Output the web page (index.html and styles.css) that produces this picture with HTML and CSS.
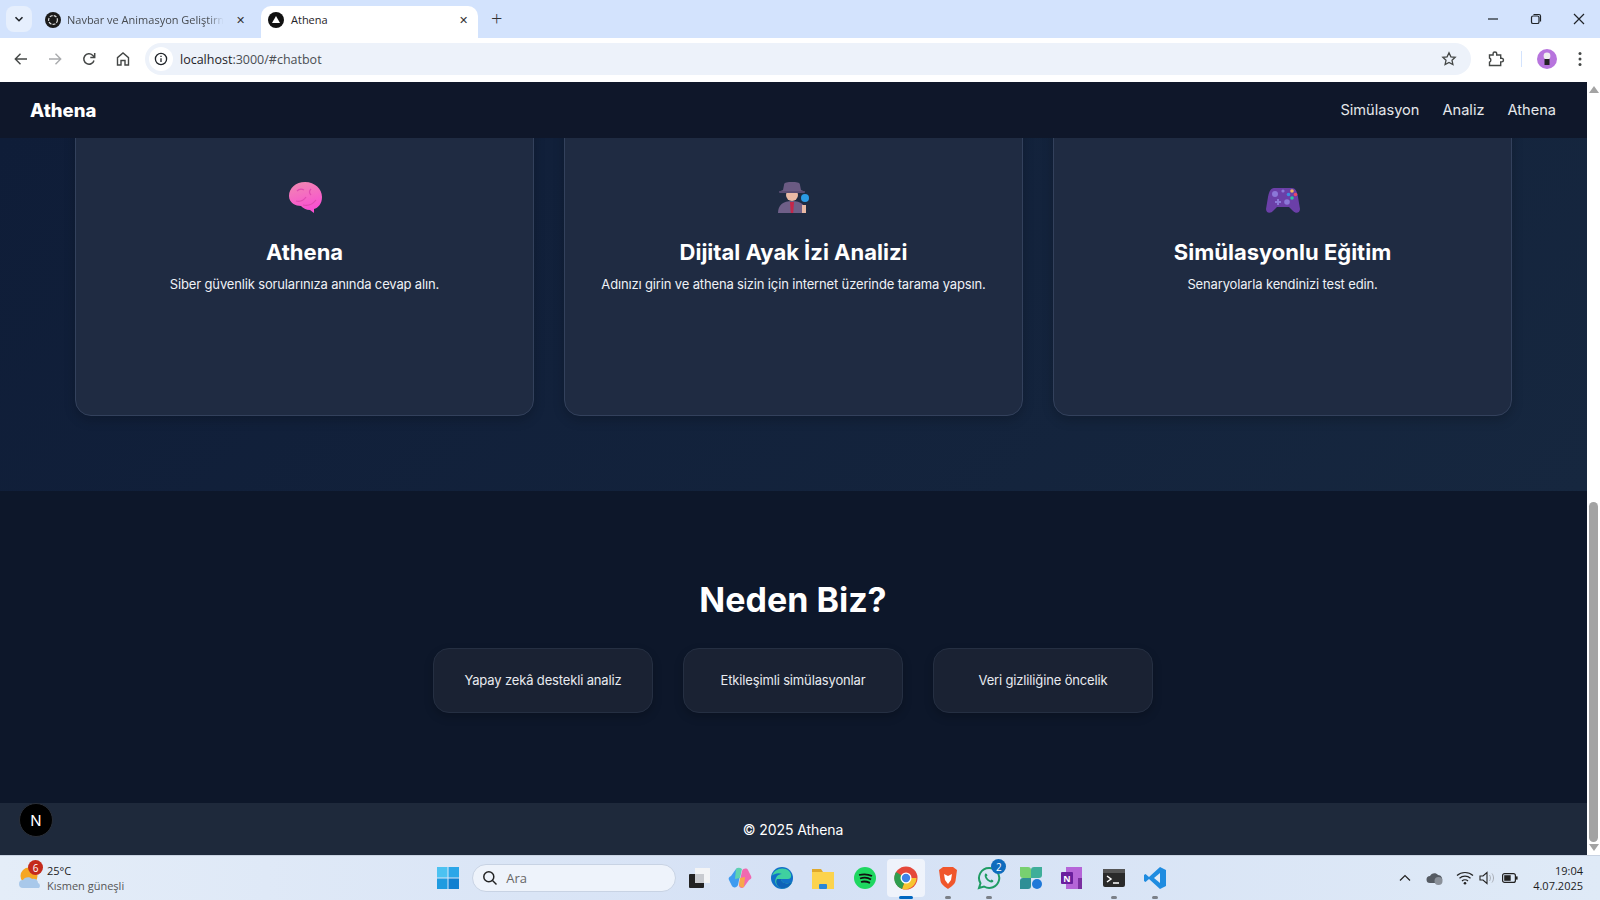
FILE: index.html
```html
<!DOCTYPE html>
<html lang="en">
<head>
    <meta charset="UTF-8">
    <title>Athena</title>
    <link rel="stylesheet" href="styles.css">
</head>
<body>
    <div class="tabstrip">
        <div class="tab-search">
            <svg width="10" height="10" viewBox="0 0 10 10"><path d="M1.500 3.200 5 6.700l3.500-3.500" fill="none" stroke="#1f2328" stroke-width="1.600"/></svg>
        </div>
        <div class="tab">
            <svg class="favicon" width="16" height="16" viewBox="0 0 16 16"><circle cx="8" cy="8" r="8" fill="#1a1a1a"/><circle cx="8" cy="8" r="4.400" fill="none" stroke="#ddd" stroke-width="1.200" stroke-dasharray="3 1.200"/></svg>
            <span class="tab-title tab-fade">Navbar ve Animasyon Geliştirm</span>
            <span class="tab-close">✕</span>
        </div>
        <div class="tab tab-active">
            <svg class="favicon" width="16" height="16" viewBox="0 0 16 16"><circle cx="8" cy="8" r="8" fill="#111"/><path d="M8 4 12 11H4Z" fill="#fff"/></svg>
            <span class="tab-title">Athena</span>
            <span class="tab-close">✕</span>
        </div>
        <span class="tab-new">+</span>
        <div class="window-btns">
            <svg width="12" height="12" viewBox="0 0 12 12"><path d="M1 6h10" stroke="#1f2328" stroke-width="1.200"/></svg>
            <svg width="12" height="12" viewBox="0 0 12 12"><rect x="1.500" y="3" width="7.500" height="7.500" rx="1.600" fill="none" stroke="#1f2328" stroke-width="1.200"/><path d="M3.500 1.500h5.500a1.600 1.600 0 0 1 1.500 1.500v5.500" fill="none" stroke="#1f2328" stroke-width="1.200"/></svg>
            <svg width="12" height="12" viewBox="0 0 12 12"><path d="M1 1l10 10M11 1 1 11" stroke="#1f2328" stroke-width="1.200"/></svg>
        </div>
    </div>

    <div class="toolbar">
        <svg class="tool" width="16" height="16" viewBox="0 0 16 16"><path d="M14 8H2.500M7.500 2.800 2.300 8l5.200 5.200" fill="none" stroke="#444746" stroke-width="1.400"/></svg>
        <svg class="tool" width="16" height="16" viewBox="0 0 16 16"><path d="M2 8h11.500M8.500 2.800 13.700 8l-5.200 5.200" fill="none" stroke="#a9abad" stroke-width="1.400"/></svg>
        <svg class="tool" width="16" height="16" viewBox="0 0 16 16"><path d="M13 9.500A5.200 5.200 0 1 1 11.600 4.200L13.300 6" fill="none" stroke="#444746" stroke-width="1.500"/><path d="M13.700 2v4.400H9.300" fill="none" stroke="#444746" stroke-width="1.500"/></svg>
        <svg class="tool" width="16" height="16" viewBox="0 0 16 16"><path d="M2.500 14V6.600L8 2l5.500 4.600V14h-3.500V9.500H6V14Z" fill="none" stroke="#444746" stroke-width="1.400"/></svg>
        <div class="omnibox">
            <span class="site-info">
                <svg width="14" height="14" viewBox="0 0 14 14"><circle cx="7" cy="7" r="5.600" fill="none" stroke="#1f2328" stroke-width="1.300"/><path d="M7 6.200v3.800M7 3.800v1.300" stroke="#1f2328" stroke-width="1.300"/></svg>
            </span>
            <span class="url">localhost<span class="url-rest">:3000/#chatbot</span></span>
            <svg class="star" width="16" height="16" viewBox="0 0 16 16"><path d="m8 1.800 1.900 4 4.300.5-3.200 3 .9 4.300L8 11.400l-3.900 2.200.9-4.300-3.200-3 4.300-.5Z" fill="none" stroke="#444746" stroke-width="1.300"/></svg>
        </div>
        <svg width="18" height="18" viewBox="0 0 18 18"><path d="M2.500 5h3.600V3.800a1.800 1.800 0 0 1 3.600 0V5h4v3.300h1a1.800 1.800 0 0 1 0 3.600h-1V15.500H2.500v-3.300a2.300 2.300 0 0 0 0-4.200Z" fill="none" stroke="#444746" stroke-width="1.400"/></svg>
        <span class="tool-sep"></span>
        <span class="avatar">
            <svg width="20" height="20" viewBox="0 0 20 20"><circle cx="10" cy="10" r="10" fill="#b774dd"/><circle cx="10" cy="7" r="3.400" fill="#eee"/><rect x="7.500" y="10" width="5" height="6" fill="#222"/></svg>
        </span>
        <svg class="tool-menu" width="4" height="16" viewBox="0 0 4 16"><circle cx="2" cy="2.500" r="1.500" fill="#444746"/><circle cx="2" cy="8" r="1.500" fill="#444746"/><circle cx="2" cy="13.500" r="1.500" fill="#444746"/></svg>
    </div>

    <div class="viewport">
        <div class="page">
            <header class="navbar">
                <div class="logo">Athena</div>
                <nav class="nav-links">
                    <a>Simülasyon</a>
                    <a>Analiz</a>
                    <a>Athena</a>
                </nav>
            </header>

            <section class="features">
                <div class="feature-row">
                    <div class="feature-card">
                        <svg class="emoji" width="36" height="36" viewBox="0 0 36 36">
                            <defs>
                                <linearGradient id="brainFill" x1="0" y1="0" x2="0.300" y2="1">
                                    <stop offset="0" stop-color="#f08ab0"/>
                                    <stop offset="1" stop-color="#f94fd2"/>
                                </linearGradient>
                            </defs>
                            <path d="M2 16C2 8 9 2 18 2c10 0 17 7 17 15 0 7-4 11-8 12l0 4-4-3c-4 0-7-2-9-4C9 26 2 23 2 16Z" fill="url(#brainFill)"/>
                            <path d="M9 21c4 1 8-1 10-4M16 25c4 1 9 0 13-5M24 9c-2 2-2 4 0 6M10 11c2-2 5-2 7-1" fill="none" stroke="#e04bb0" stroke-width="1.200"/>
                        </svg>
                        <h3>Athena</h3>
                        <p>Siber güvenlik sorularınıza anında cevap alın.</p>
                    </div>
                    <div class="feature-card">
                        <svg class="emoji" width="36" height="36" viewBox="1 1 36 36">
                            <path d="M3 34c0-8 5-12 14-12s14 4 14 12Z" fill="#6f5f88"/>
                            <path d="M15 23h4l-.8 11h-2.400Z" fill="#c4274a"/>
                            <circle cx="17" cy="16" r="6" fill="#e9b9a4"/>
                            <path d="M9 6c0-3 4-3 8-3s8 0 8 3l1 5c3 1 4 2 4 2H4s1-1 4-2Z" fill="#6a5a82"/>
                            <rect x="4" y="12" width="26" height="2" rx="1" fill="#5a4c72"/>
                            <path d="M27 26h4v8h-4Z" fill="#e9b9a4"/>
                            <circle cx="30" cy="19" r="4" fill="#2b9be6"/>
                        </svg>
                        <h3>Dijital Ayak İzi Analizi</h3>
                        <p>Adınızı girin ve athena sizin için internet üzerinde tarama yapsın.</p>
                    </div>
                    <div class="feature-card">
                        <svg class="emoji" width="36" height="36" viewBox="0 -2 36 36">
                            <path d="M9 6h18c3 0 5 3 6 9l2 12c0 4-4 5-7 2l-4-4H12l-4 4c-3 3-7 2-7-2l2-12c1-6 3-9 6-9Z" fill="#6b3fa8"/>
                            <circle cx="10" cy="12" r="3" fill="#8b78d8"/>
                            <circle cx="18" cy="9" r="1.600" fill="#8b78d8"/>
                            <path d="M12 17h2v2h2v2h-2v2h-2v-2h-2v-2h2Z" fill="#8b78d8"/>
                            <circle cx="22" cy="20" r="2.800" fill="#8b78d8"/>
                            <circle cx="27" cy="9" r="1.800" fill="#f2b35a"/>
                            <circle cx="30.500" cy="12.500" r="1.800" fill="#e8476a"/>
                            <circle cx="27" cy="16" r="1.800" fill="#2cc4a8"/>
                            <circle cx="23.500" cy="12.500" r="1.800" fill="#3b8fe0"/>
                        </svg>
                        <h3>Simülasyonlu Eğitim</h3>
                        <p>Senaryolarla kendinizi test edin.</p>
                    </div>
                </div>
            </section>

            <section class="why">
                <h2>Neden Biz?</h2>
                <div class="why-row">
                    <div class="why-card">Yapay zekâ destekli analiz</div>
                    <div class="why-card">Etkileşimli simülasyonlar</div>
                    <div class="why-card">Veri gizliliğine öncelik</div>
                </div>
            </section>

            <footer class="footer">© 2025 Athena</footer>

            <div class="next-badge">N</div>
        </div>
        <div class="scrollbar">
            <span class="arrow-up"></span>
            <div class="scroll-track"><div class="scroll-thumb"></div></div>
            <span class="arrow-down"></span>
        </div>
    </div>

    <div class="taskbar">
        <div class="weather">
            <span class="weather-icon">
                <svg width="24" height="24" viewBox="0 0 24 24"><circle cx="10" cy="10" r="8.500" fill="#f5a623"/><path d="M4 22a4 4 0 0 1 0-8c1-3 7-4 9-1 3-1 6 1 6 4a3 3 0 0 1 1 5Z" fill="#a8c8ea"/></svg>
                <span class="weather-badge">6</span>
            </span>
            <div class="weather-text">
                <div class="temp">25°C</div>
                <div class="sky">Kısmen güneşli</div>
            </div>
        </div>

        <div class="task-icons">
            <span class="task-item">
                <svg width="24" height="24" viewBox="0 0 24 24"><path d="M1 1h10.500v10.500H1Z" fill="#4cc2f1"/><path d="M12.500 1H23v10.500H12.500Z" fill="#2ba6e8"/><path d="M1 12.500h10.500V23H1Z" fill="#1f9be0"/><path d="M12.500 12.500H23V23H12.500Z" fill="#0f7fd0"/></svg>
            </span>
            <div class="searchbox">
                <svg width="16" height="16" viewBox="0 0 16 16"><circle cx="6.800" cy="6.800" r="5" fill="none" stroke="#222" stroke-width="1.500"/><path d="m10.500 10.500 4 4" stroke="#222" stroke-width="1.500"/></svg>
                <span>Ara</span>
            </div>
            <span class="task-item">
                <svg width="24" height="24" viewBox="0 0 24 24"><rect x="8" y="2" width="15" height="15" fill="#f3f4f6"/><rect x="2" y="8" width="15" height="14" rx="1" fill="#222"/><rect x="8" y="8" width="9" height="9" fill="#c9cbd0"/></svg>
            </span>
            <span class="task-item">
                <svg width="24" height="24" viewBox="0 0 24 24"><path d="M8 3c2-2 5-1 5 2l-3 14c-1 3-5 3-6 1L1 14c-1-2 0-3 2-4Z" fill="#3d9bf0"/><path d="M16 21c-2 2-5 1-5-2l3-14c1-3 5-3 6-1l3 6c1 2 0 3-2 4Z" fill="#f069b0"/><path d="M8 3c2-2 4-1 6 0l-2 9-5 1Z" fill="#5fd2b0"/><path d="M12 12l5-1-1 10c-2 1-4 0-5-2Z" fill="#f6a84a"/></svg>
            </span>
            <span class="task-item">
                <svg width="24" height="24" viewBox="0 0 24 24"><circle cx="12" cy="12" r="11" fill="#1170c8"/><path d="M2 10C4 3 13 0 19 5c3 3 3 8-1 8H11c0 4 6 6 11 3-2 5-7 7-11 6-5-2-7-6-5-10 1-3 4-4 6-4-4-2-8 0-11 2Z" fill="#3fd0a0"/><path d="M11 13c0 4 6 6 11 3-2 5-7 7-11 6-4-1-6-6-4-9Z" fill="#0d62b8"/></svg>
            </span>
            <span class="task-item">
                <svg width="24" height="24" viewBox="0 0 24 24"><path d="M1 3h9l2 3H1Z" fill="#e0a92b"/><path d="M1 6h22v17H1Z" fill="#fcd34d"/><rect x="8" y="18" width="8" height="5" rx="1" fill="#2a86d8"/></svg>
            </span>
            <span class="task-item">
                <svg width="24" height="24" viewBox="0 0 24 24"><circle cx="12" cy="12" r="11" fill="#1ed760"/><path d="M6 9c4-1 9-1 13 1M7 12.500c3-1 8-1 11 1M8 16c3-1 6-.500 9 .800" fill="none" stroke="#111" stroke-width="1.800"/></svg>
            </span>
            <span class="task-item task-on">
                <svg width="24" height="24" viewBox="0 0 24 24"><circle cx="12" cy="12" r="11.500" fill="#e5483a"/><path d="M12 12 22.500 12A11.500 11.500 0 0 1 8 23Z" fill="#f7c531"/><path d="M12 12 8 23A11.500 11.500 0 0 1 2 6Z" fill="#2f9e4f"/><circle cx="12" cy="12" r="5.500" fill="#fff"/><circle cx="12" cy="12" r="4.200" fill="#3f83e8"/></svg>
            </span>
            <span class="task-item task-open">
                <svg width="24" height="24" viewBox="0 0 24 24"><path d="M7 1h10l4 3-1.500 11c-1 4-5 6-7.500 8-2.500-2-6.500-4-7.500-8L3 4Z" fill="#f0562b"/><path d="M8 8l4 2 4-2-1 6-3 4-3-4Z" fill="#fff"/></svg>
            </span>
            <span class="task-item task-open">
                <svg width="24" height="24" viewBox="0 0 24 24"><path d="M12 2a10 10 0 1 1-5 18.500L2 22l1.500-4.800A10 10 0 0 1 12 2Z" fill="none" stroke="#1f9c64" stroke-width="2"/><path d="M8 8c1-1 2 0 2.500 1.500l-1 1c1 2 2 3 4 4l1-1c1.500.500 2.500 1.500 1.500 2.500-3 2-10-4-8-8Z" fill="#1f9c64"/></svg>
                <span class="task-badge">2</span>
            </span>
            <span class="task-item">
                <svg width="24" height="24" viewBox="0 0 24 24"><path d="M1 1h8a3 3 0 0 1 3 3v8H4a3 3 0 0 1-3-3Z" fill="#78d070"/><path d="M12 4a3 3 0 0 1 3-3h8v8a3 3 0 0 1-3 3h-8Z" fill="#3fae9a"/><path d="M1 15a3 3 0 0 1 3-3h8v8a3 3 0 0 1-3 3H1Z" fill="#2f8f96"/><circle cx="18" cy="18" r="5" fill="#1f78d8"/></svg>
            </span>
            <span class="task-item">
                <svg width="24" height="24" viewBox="0 0 24 24"><path d="M6 1h16v22H6Z" fill="#b565d8"/><path d="M18 12h4v11h-4Z" fill="#7a2fa0"/><rect x="1" y="6" width="12" height="12" rx="1" fill="#6a1f9e"/><text class="onenote-n" x="7" y="15.500">N</text></svg>
            </span>
            <span class="task-item task-open">
                <svg width="24" height="24" viewBox="0 0 24 24"><rect x="1" y="3" width="22" height="18" rx="2" fill="#2a2a2a"/><rect x="1" y="3" width="22" height="4" fill="#555"/><path d="m5 10 4 3-4 3" fill="none" stroke="#fff" stroke-width="1.500"/><path d="M11 17h6" stroke="#fff" stroke-width="1.500"/></svg>
            </span>
            <span class="task-item task-open">
                <svg width="24" height="24" viewBox="0 0 24 24"><path d="M17 1 23 4v16l-6 3L6 13l-3.500 3L1 15V9l1.500-1L6 11Z" fill="#1f8ce0"/><path d="M17 7v10l-6-5Z" fill="#e2ebf7"/></svg>
            </span>
        </div>

        <div class="tray">
            <svg class="tray-chevron" width="12" height="8" viewBox="0 0 12 8"><path d="M1 6.500 6 1.500l5 5" fill="none" stroke="#222" stroke-width="1.200"/></svg>
            <svg class="tray-cloud" width="18" height="16" viewBox="0 0 18 16"><path d="M4 13a3.500 3.500 0 0 1 0-7c1-3 6-4 8-1 3 0 5 3 4 6l-2 2Z" fill="#555b63"/><circle cx="12.500" cy="11" r="4" fill="#8a9099"/></svg>
            <svg class="tray-wifi" width="18" height="14" viewBox="0 0 18 14"><path d="M1 4.500c4.500-4 11.500-4 16 0M3.500 7.200c3-2.700 8-2.700 11 0M6 10c1.600-1.400 4.400-1.400 6 0" fill="none" stroke="#222" stroke-width="1.200"/><circle cx="9" cy="12.300" r="1.300" fill="#222"/></svg>
            <svg class="tray-vol" width="16" height="14" viewBox="0 0 16 14"><path d="M1 5h3l4-3.500v11L4 9H1Z" fill="none" stroke="#222" stroke-width="1.100"/><path d="M10.500 4c1.200 1.800 1.200 4.200 0 6M13 2.500c2 2.800 2 6.200 0 9" fill="none" stroke="#a8adb5" stroke-width="1"/></svg>
            <svg class="tray-batt" width="16" height="10" viewBox="0 0 16 10"><rect x=".6" y=".6" width="12.800" height="8.800" rx="2" fill="none" stroke="#222" stroke-width="1.200"/><rect x="2.200" y="2.200" width="6.500" height="5.600" fill="#222"/><rect x="14" y="3.400" width="1.600" height="3.200" fill="#222"/></svg>
            <div class="clock">
                <div>19:04</div>
                <div>4.07.2025</div>
            </div>
        </div>
    </div>
</body>
</html>
```

FILE: styles.css
```css
* {
    box-sizing: border-box;
}

html, body {
    margin: 0;
    padding: 0;
    height: 900px;
    overflow: hidden;
}

body {
    font-family: Inter, "Liberation Sans", sans-serif;
    display: flex;
    flex-direction: column;
    background: #fff;
}

/* browser tabs */
.tabstrip {
    height: 38px;
    background-color: #d3e3fd;
    display: flex;
    align-items: flex-end;
    padding-left: 6px;
    font-family: "Open Sans", sans-serif;
    flex-shrink: 0;
}

.tab-search {
    width: 26px;
    height: 26px;
    margin-bottom: 6px;
    border-radius: 8px;
    background-color: #e6effd;
    display: flex;
    align-items: center;
    justify-content: center;
}

.tab {
    width: 223px;
    height: 32px;
    padding: 0 16px 5px 7px;
    display: flex;
    align-items: center;
    gap: 6px;
    font-size: 11px;
    color: #474b50;
    margin-left: 6px;
}

.tab-active {
    width: 217px;
    margin-left: 0;
    padding-right: 10px;
    background-color: #fff;
    border-radius: 10px 10px 0 0;
    color: #1f2328;
    gap: 7px;
}

.favicon {
    flex-shrink: 0;
}

.tab-title {
    flex: 1;
    white-space: nowrap;
}

.tab-fade {
    -webkit-mask-image: linear-gradient(90deg, #000 86%, transparent 96%);
    mask-image: linear-gradient(90deg, #000 86%, transparent 96%);
}

.tab-close {
    font-size: 11px;
    color: #333;
}

.tab-new {
    font-size: 20px;
    font-weight: 300;
    color: #333;
    margin: 0 0 6px 13px;
    line-height: 26px;
}

.window-btns {
    margin-left: auto;
    height: 38px;
    display: flex;
    align-items: center;
    gap: 31px;
    padding-right: 15px;
}

/* browser toolbar */
.toolbar {
    height: 44px;
    background-color: #fff;
    border-radius: 10px 10px 0 0;
    display: flex;
    align-items: center;
    padding: 0 18px 2px 13px;
    flex-shrink: 0;
    gap: 16px;
    font-family: "Open Sans", sans-serif;
}

.tool {
    margin-right: 2px;
}

.omnibox {
    flex: 1;
    height: 32px;
    margin-left: -4px;
    border-radius: 16px;
    background-color: #edf2fa;
    display: flex;
    align-items: center;
    padding: 0 14px 0 4px;
    font-size: 12.5px;
    color: #1f2328;
}

.site-info {
    width: 24px;
    height: 24px;
    border-radius: 50%;
    background-color: #fff;
    display: flex;
    align-items: center;
    justify-content: center;
    margin-right: 7px;
}

.url-rest {
    color: #4a4e53;
}

.star {
    margin-left: auto;
}

.tool-sep {
    width: 1px;
    height: 16px;
    margin-right: -1px;
    background-color: #d3e3fd;
}

.avatar {
    display: flex;
}

.tool-menu {
    margin-left: 5px;
}

/* page */
.viewport {
    height: 773px;
    display: flex;
    flex-shrink: 0;
}

.page {
    width: 1587px;
    position: relative;
    color: #fff;
}

.navbar {
    height: 56px;
    background-color: #0f172a;
    display: flex;
    align-items: center;
    justify-content: space-between;
    padding: 0 31px 0 30px;
}

.logo {
    font-size: 18.5px;
    font-weight: 800;
}

.nav-links {
    display: flex;
    gap: 23px;
    font-size: 14.6px;
    color: #e5e7eb;
}

.features {
    height: 353px;
    overflow: hidden;
    background: linear-gradient(135deg, #0f1d38, #16273f);
    padding: 0 75px;
}

.feature-row {
    display: grid;
    grid-template-columns: repeat(3, 1fr);
    gap: 30px;
    margin-top: -20px;
}

.feature-card {
    height: 298px;
    background-color: #1f2b42;
    border: 1px solid #33415c;
    border-radius: 16px;
    padding-top: 61px;
    text-align: center;
    box-shadow: 0 4px 12px rgba(0, 0, 0, 0.2);
}

.emoji {
    display: block;
    margin: 0 auto;
}

.feature-card h3 {
    font-size: 22px;
    font-weight: 700;
    margin: 21px 0 0;
    line-height: 30px;
}

.feature-card p {
    font-size: 13px;
    letter-spacing: -0.15px;
    margin: 8px 0 0;
    line-height: 19px;
    color: #eef1f6;
}

.why {
    height: 312px;
    background-color: #0d172a;
    padding: 85px 1px 0 0;
    text-align: center;
}

.why h2 {
    font-size: 34px;
    font-weight: 700;
    line-height: 48px;
    margin: 0;
}

.why-row {
    display: flex;
    justify-content: center;
    gap: 30px;
    margin-top: 24px;
}

.why-card {
    width: 220px;
    height: 65px;
    padding-bottom: 1px;
    background-color: #1a2233;
    border: 1px solid #252f42;
    border-radius: 16px;
    display: flex;
    align-items: center;
    justify-content: center;
    font-size: 13px;
    letter-spacing: -0.15px;
    color: #e8ebf0;
    box-shadow: 0 4px 10px rgba(0, 0, 0, 0.2);
}

.footer {
    height: 52px;
    background-color: #1e293b;
    display: flex;
    align-items: center;
    justify-content: center;
    padding-right: 1px;
    font-size: 14px;
    letter-spacing: -0.1px;
}

.next-badge {
    position: absolute;
    left: 19px;
    bottom: 18px;
    width: 34px;
    height: 34px;
    border-radius: 50%;
    background-color: #000;
    border: 1px solid #2a2f38;
    display: flex;
    align-items: center;
    justify-content: center;
    font-size: 15px;
    color: #fff;
}

.scrollbar {
    width: 13px;
    background-color: #fff;
    display: flex;
    flex-direction: column;
    align-items: center;
    padding: 4px 0;
}

.arrow-up {
    border: 5px solid transparent;
    border-top: 0;
    border-bottom: 7px solid #a3a3a3;
}

.arrow-down {
    border: 5px solid transparent;
    border-bottom: 0;
    border-top: 7px solid #a3a3a3;
}

.scroll-track {
    flex: 1;
    width: 100%;
    display: flex;
    flex-direction: column;
    justify-content: flex-end;
    padding: 2px;
}

.scroll-thumb {
    height: 340px;
    background-color: #a3a3a3;
    border-radius: 5px;
}

/* windows taskbar */
.taskbar {
    flex: 1;
    display: grid;
    grid-template-columns: 1fr auto 1fr;
    align-items: center;
    background: linear-gradient(90deg, #e4edf8, #d5e1f5 50%, #dfeaf7);
    border-top: 1px solid #c9d3e2;
    font-family: "Open Sans", "Noto Sans", sans-serif;
    font-size: 11px;
    color: #1c1c1c;
}

.weather {
    display: flex;
    align-items: center;
    gap: 4px;
    padding-left: 19px;
}

.weather-icon {
    position: relative;
    display: flex;
}

.weather-badge {
    position: absolute;
    top: -6px;
    left: 9px;
    width: 15px;
    height: 15px;
    border-radius: 50%;
    background-color: #c42b1c;
    color: #fff;
    font-size: 10px;
    display: flex;
    align-items: center;
    justify-content: center;
}

.weather-text {
    line-height: 15px;
}

.sky {
    color: #555;
}

.task-icons {
    display: flex;
    align-items: center;
    gap: 17.500px;
    padding-left: 3px;
}

.task-item {
    position: relative;
    display: flex;
}

.task-on::before {
    content: "";
    position: absolute;
    inset: -7px;
    background-color: rgba(255, 255, 255, 0.6);
    border-radius: 4px;
}

.task-on svg, .task-open svg {
    position: relative;
}

.task-on::after {
    content: "";
    position: absolute;
    left: 5px;
    bottom: -9px;
    width: 14px;
    height: 3px;
    border-radius: 2px;
    background-color: #0067c0;
}

.task-open::after {
    content: "";
    position: absolute;
    left: 9px;
    bottom: -9px;
    width: 6px;
    height: 3px;
    border-radius: 2px;
    background-color: #7b8088;
}

.task-badge {
    position: absolute;
    top: -7px;
    right: -5px;
    width: 15px;
    height: 15px;
    border-radius: 50%;
    background-color: #0f6cbd;
    color: #fff;
    font-size: 10px;
    display: flex;
    align-items: center;
    justify-content: center;
}

.onenote-n {
    font-size: 9px;
    font-weight: 700;
    fill: #fff;
    text-anchor: middle;
}

.searchbox {
    width: 204px;
    height: 28px;
    margin: 0 -7px 0 -5px;
    border-radius: 14px;
    background-color: #eef3fb;
    border: 1px solid #c8d3e4;
    display: flex;
    align-items: center;
    gap: 8px;
    padding-left: 9px;
    font-size: 13px;
    color: #666;
}

.tray {
    display: flex;
    align-items: center;
    justify-content: flex-end;
    padding-right: 17px;
}

.tray-cloud {
    margin-left: 15px;
}

.tray-wifi {
    margin-left: 12px;
}

.tray-vol {
    margin-left: 5px;
}

.tray-batt {
    margin-left: 7px;
}

.clock {
    text-align: right;
    font-size: 11px;
    line-height: 15px;
    margin-left: 15px;
}
```
